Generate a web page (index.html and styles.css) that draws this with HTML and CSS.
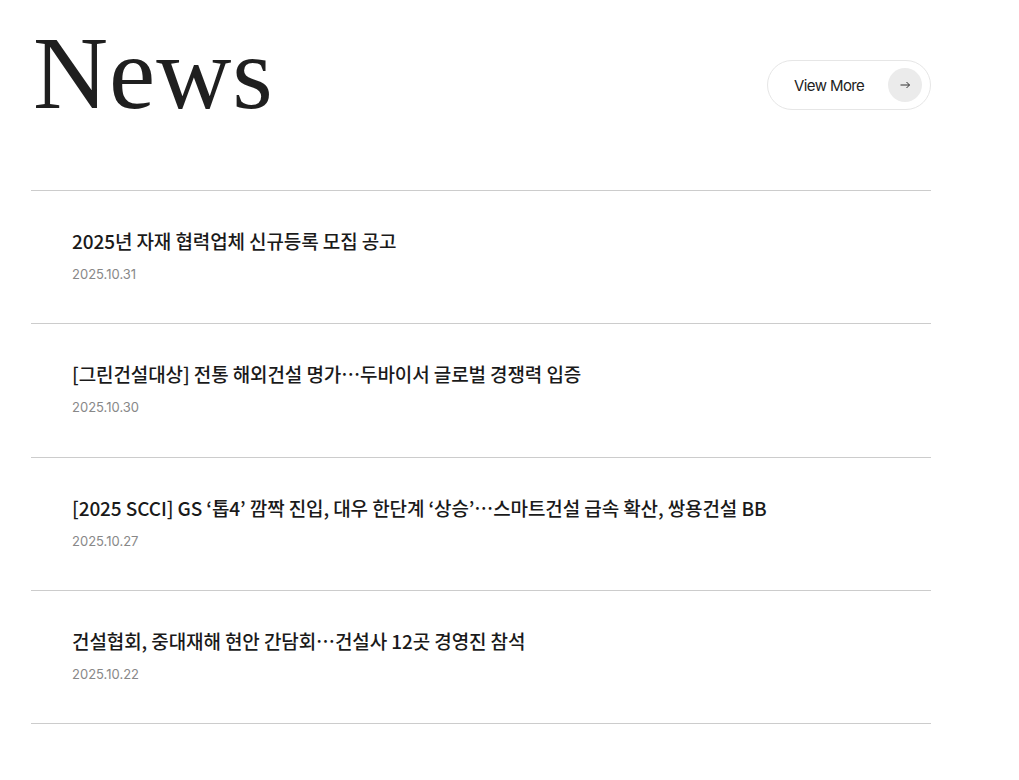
FILE: index.html
```html
<!DOCTYPE html>
<html>
<head>
    <title>News</title>
    <link rel="stylesheet" href="styles.css">
</head>
<body>
    <div id="news">
        <div class="news-head">
            <h1>News</h1>
            <a class="view-more" href="#">
                <span>View More</span>
                <span class="arrow">
                    <svg width="12" height="12" viewBox="0 0 12 12" fill="none" stroke="#333" stroke-width="1">
                        <path d="M1.5 6h9M7.5 3L10.5 6 7.5 9"/>
                    </svg>
                </span>
            </a>
        </div>
        <ul class="news-list">
            <li class="news-item">
                <p class="news-title">2025년 자재 협력업체 신규등록 모집 공고</p>
                <p class="news-date">2025.10.31</p>
            </li>
            <li class="news-item">
                <p class="news-title">[그린건설대상] 전통 해외건설 명가…두바이서 글로벌 경쟁력 입증</p>
                <p class="news-date">2025.10.30</p>
            </li>
            <li class="news-item">
                <p class="news-title">[2025 SCCI] GS ‘톱4’ 깜짝 진입, 대우 한단계 ‘상승’…스마트건설 급속 확산, 쌍용건설 BB</p>
                <p class="news-date">2025.10.27</p>
            </li>
            <li class="news-item">
                <p class="news-title">건설협회, 중대재해 현안 간담회…건설사 12곳 경영진 참석</p>
                <p class="news-date">2025.10.22</p>
            </li>
        </ul>
    </div>
</body>
</html>
```

FILE: styles.css
```css
body {
    margin: 0;
    background-color: #fff;
    font-family: "Noto Sans CJK KR", "Noto Sans", sans-serif;
    color: #222;
}
#news {
    width: 900px;
    padding: 18px 0 0 31px;
}
.news-head {
    display: flex;
    justify-content: space-between;
    align-items: flex-start;
    height: 132px;
    border-bottom: 1px solid #ccc;
    padding-bottom: 40px;
}
h1 {
    margin: 3px 0 0 2px;
    font-family: "Liberation Serif", serif;
    font-weight: 400;
    font-size: 104px;
    line-height: 1;
    color: #1f1f1f;
    letter-spacing: 1px;
}
.view-more {
    display: flex;
    align-items: center;
    justify-content: space-between;
    width: 164px;
    height: 50px;
    margin-top: 42px;
    box-sizing: border-box;
    padding: 0 8px 0 26px;
    border: 1px solid #e6e6e6;
    border-radius: 25px;
    text-decoration: none;
    color: #222;
    font-family: "Inter", sans-serif;
    font-size: 15px;
    letter-spacing: -0.6px;
}
.arrow {
    display: flex;
    align-items: center;
    justify-content: center;
    width: 34px;
    height: 34px;
    border-radius: 50%;
    background-color: #ebebeb;
}
.news-list {
    list-style: none;
    margin: 0;
    padding: 0;
}
.news-item {
    height: 133.25px;
    box-sizing: border-box;
    padding: 37px 0 0 41px;
    border-bottom: 1px solid #ccc;
}
.news-title {
    margin: 0;
    font-size: 19px;
    font-weight: 500;
    line-height: 26px;
    letter-spacing: -0.1px;
    color: #1a1a1a;
}
.news-date {
    margin: 11px 0 0;
    font-family: "Inter", sans-serif;
    font-size: 13px;
    line-height: 18px;
    color: #888;
}
```
